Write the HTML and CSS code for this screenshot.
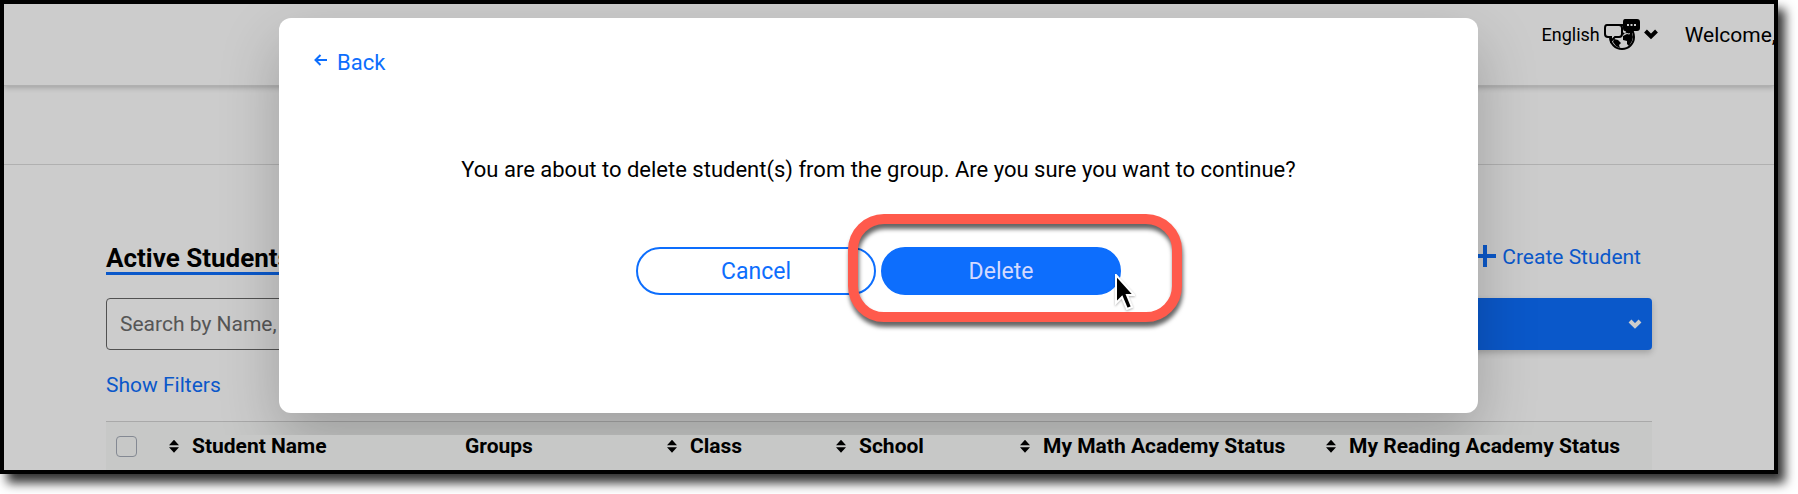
FILE: index.html
```
<!DOCTYPE html>
<html lang="en">
<head>
    <meta charset="utf-8">
    <title>Students</title>
    <link rel="stylesheet" href="styles.css">
</head>
<body>
    <div class="frame">
        <header class="topbar">
            <button type="button" class="language">
                English
                <svg class="globe" width="37" height="33" viewBox="0 0 37 33" aria-hidden="true">
                    <circle cx="19" cy="19" r="12" fill="none" stroke="#000" stroke-width="2"/>
                    <path d="M19 8l9 3 2 8-1 4-3 5-2-2 0-3-4-1 0-4 4-2-5-2zM11 21l4 1 3 3-2 2 1 3-4-2-3-4zM19 7h-2v6l3 4 3-3z" fill="#000"/>
                    <path d="M22 15l4 1 2-1" fill="none" stroke="#fff"/>
                    <path d="M4 7h12q3 0 3 3v6q0 3-3 3h-4l-4 4v-4H5q-3 0-3-3v-6q0-3 2-3z" fill="#fff" stroke="#000" stroke-width="2"/>
                    <path d="M22 1h12q3 0 3 3v6q0 3-3 3h-3l-4 4v-4h-5q-2 0-2-3V4q0-3 2-3z" fill="#000"/>
                    <path d="M24 7h2m1.500 0h2m1.500 0h2" stroke="#fff" stroke-width="2"/>
                </svg>
                <svg class="chevron" width="14" height="11" viewBox="0 0 14 11" aria-hidden="true">
                    <path d="M1.500 2L7 7.500 12.500 2" fill="none" stroke="#000" stroke-width="4"/>
                </svg>
            </button>
            <span class="welcome">Welcome,</span>
        </header>
        <div class="subnav"></div>

        <main class="content">
            <div class="title-row">
                <h1>Active Students</h1>
                <a href="#" class="create">
                    <svg width="22" height="22" viewBox="0 0 22 22" aria-hidden="true">
                        <path d="M11 0v22M0 11h22" stroke="#0d6efd" stroke-width="4"/>
                    </svg>
                    Create Student
                </a>
            </div>
            <div class="search-row">
                <input type="text" class="search" placeholder="Search by Name, Class" aria-label="Search students">
                <button type="button" class="actions" aria-label="Actions">
                    <svg width="14" height="10" viewBox="0 0 14 10" aria-hidden="true">
                        <path d="M2 2l5 5 5-5" fill="none" stroke="#fff" stroke-width="4"/>
                    </svg>
                </button>
            </div>
            <a href="#" class="filters">Show Filters</a>
            <table class="students">
                <colgroup>
                    <col class="col-check"><col class="col-name"><col class="col-groups"><col class="col-class"><col class="col-school"><col class="col-math"><col>
                </colgroup>
                <thead>
                    <tr>
                        <th><input type="checkbox" aria-label="Select all students"></th>
                        <th><span class="sort"></span>Student Name</th>
                        <th>Groups</th>
                        <th><span class="sort"></span>Class</th>
                        <th><span class="sort"></span>School</th>
                        <th><span class="sort"></span>My Math Academy Status</th>
                        <th><span class="sort"></span>My Reading Academy Status</th>
                    </tr>
                </thead>
            </table>
        </main>

        <div class="backdrop"></div>
        <div class="modal-layer">
            <div class="modal" role="dialog" aria-modal="true">
                <a href="#" class="back">
                    <svg width="14" height="12" viewBox="0 0 14 12" aria-hidden="true">
                        <path d="M13 6H2M6.500 1L1.500 6l5 5" fill="none" stroke="#0d6efd" stroke-width="2"/>
                    </svg>
                    Back
                </a>
                <p>You are about to delete student(s) from the group. Are you sure you want to continue?</p>
                <div class="buttons">
                    <button type="button" class="btn cancel">Cancel</button>
                    <div class="delete-wrap">
                        <button type="button" class="btn delete">Delete</button>
                        <div class="highlight"></div>
                        <svg class="cursor" width="20" height="36" viewBox="0 0 20 36" aria-hidden="true">
                            <path d="M1 1v28l6-6 5 12 5-2-5-12h7z" fill="#000" stroke="#fff" stroke-width="2"/>
                        </svg>
                    </div>
                </div>
            </div>
        </div>
    </div>
</body>
</html>
```

FILE: styles.css
```
* {
    box-sizing: border-box;
}
body {
    margin: 0;
    background: #fff;
    font-family: Roboto, "Liberation Sans", sans-serif;
    font-size: 21px;
    color: #000;
}
button, input {
    font-family: inherit;
    font-size: inherit;
}
a {
    color: #0d6efd;
    text-decoration: none;
}
.frame {
    position: relative;
    margin: 0 20px 20px 0;
    border: 4px solid #000;
    overflow: hidden;
    box-shadow: 7px 9px 10px rgba(0,0,0,0.8);
}
.topbar {
    display: flex;
    justify-content: flex-end;
    align-items: flex-start;
    height: 82px;
    padding-top: 14px;
    border-bottom: 1px solid #ddd;
    box-shadow: 0 2px 5px rgba(0,0,0,0.2);
}
.language {
    display: flex;
    align-items: center;
    padding: 0;
    border: 0;
    background: none;
    color: #000;
    font-size: 18px;
}
.globe {
    margin: 0 4px 0 3px;
}
.welcome {
    margin: 4px -2px 0 27px;
    line-height: 26px;
}
.subnav {
    height: 79px;
    border-bottom: 1px solid #ddd;
}
.content {
    padding: 80px 122px 0 102px;
}
.title-row {
    display: flex;
    justify-content: space-between;
    align-items: flex-start;
}
h1 {
    margin: 0;
    border-bottom: 3px solid #0d6efd;
    font-size: 26px;
    line-height: 27px;
    font-weight: bold;
}
.create {
    display: flex;
    gap: 6px;
    margin-right: 11px;
    line-height: 24px;
}
.search-row {
    display: flex;
    justify-content: space-between;
    margin: 23px 0;
}
.search {
    width: 480px;
    height: 52px;
    padding: 0 13px;
    border: 1px solid #666;
    border-radius: 4px;
}
.search::placeholder {
    color: #6c6c6c;
}
.actions {
    display: flex;
    align-items: center;
    justify-content: flex-end;
    width: 320px;
    height: 52px;
    padding: 0 10px;
    border: 0;
    border-radius: 4px;
    background: #0d6efd;
    box-shadow: 0 3px 6px rgba(0,0,0,0.2);
}
.filters {
    display: block;
    line-height: 24px;
}
.students {
    width: 100%;
    margin-top: 24px;
    table-layout: fixed;
    border-collapse: collapse;
    border-top: 1px solid #d4d4d4;
    background: #f9fbf9;
    font-size: 21px;
}
.students th {
    height: 48px;
    padding: 0;
    text-align: left;
    white-space: nowrap;
}
.col-check { width: 63px; }
.col-name { width: 296px; }
.col-groups { width: 202px; }
.col-class { width: 169px; }
.col-school { width: 184px; }
.col-math { width: 306px; }
.students input {
    display: block;
    appearance: none;
    width: 21px;
    height: 21px;
    margin: 2px 10px 0;
    border: 1px solid #a5acb8;
    border-radius: 4px;
}
.sort {
    display: inline-block;
    width: 10px;
    height: 13px;
    margin-right: 13px;
    background: #000;
    clip-path: polygon(50% 0, 100% 42%, 0 42%, 0 58%, 100% 58%, 50% 100%, 0 58%, 0 42%);
}
.backdrop {
    position: absolute;
    inset: 0;
    background: rgba(0,0,0,0.2);
}
/* stops above the header labels, so the modal shadow does not cover them */
.modal-layer {
    position: absolute;
    inset: 0 0 35px;
    overflow: hidden;
    padding: 14px 296px 0 275px;
}
.modal {
    padding: 32px 35px 118px;
    border-radius: 12px;
    background: #fff;
    box-shadow: 0 24px 60px rgba(0,0,0,0.22);
    font-size: 22px;
}
.back {
    display: flex;
    align-items: flex-start;
    gap: 9px;
    line-height: 26px;
}
.back svg {
    margin-top: 4px;
}
.modal p {
    margin: 81px 0 64px;
    line-height: 26px;
    text-align: center;
}
.buttons {
    display: flex;
    justify-content: center;
    gap: 5px;
}
.btn {
    display: block;
    width: 240px;
    height: 48px;
    border: 2px solid #0d6efd;
    border-radius: 24px;
    background: #fff;
    color: #0d6efd;
    font-size: 23px;
}
.delete {
    background: #0d6efd;
    color: #d3daff;
}
.delete-wrap {
    position: relative;
}
.highlight {
    position: absolute;
    top: -33px;
    right: -61px;
    bottom: -27px;
    left: -33px;
    border: 10px solid #ff5a4c;
    border-radius: 36px;
    filter: drop-shadow(1px 5px 2px rgba(0,0,0,0.6));
}
.cursor {
    position: absolute;
    top: 27px;
    right: -14px;
    filter: drop-shadow(0 1px 1px rgba(0,0,0,0.3));
}
```
